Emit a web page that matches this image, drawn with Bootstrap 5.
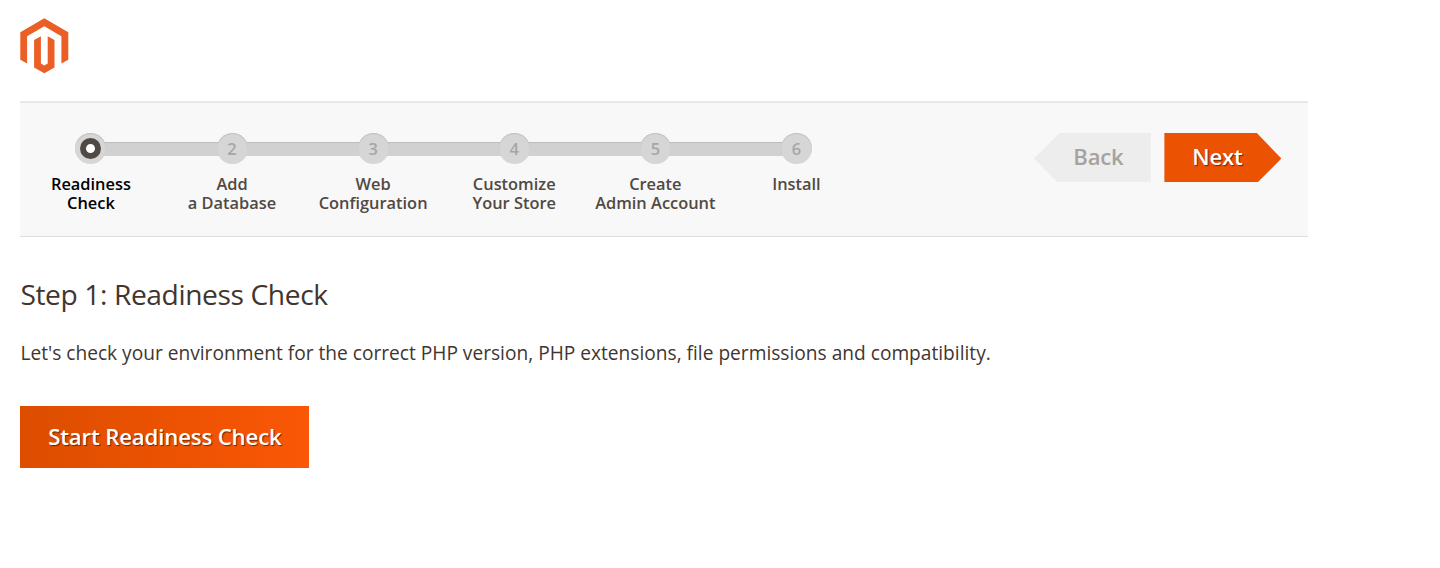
<!DOCTYPE html>
<html lang="en">
<head>
<meta charset="utf-8">
<meta name="viewport" content="width=device-width, initial-scale=1">
<title>Magento Installation</title>
<link href="https://cdn.jsdelivr.net/npm/bootstrap@5.3.0/dist/css/bootstrap.min.css" rel="stylesheet">
<style>
body{font-family:"Open Sans","Noto Sans",sans-serif;color:#41362f;background:#fff}
.wizard{width:1288px;margin-left:20.4px}
.logo{width:49px;height:56px;margin-top:18px}
.steps-bar{height:136px;margin-top:27px;background:#f8f8f8;border-top:2px solid #e8e8e8;border-bottom:1px solid #dedede;padding:30px 27px 0 0}
.step-item{width:141.1px;position:relative;color:#514943;font-size:16.4px;font-weight:600;line-height:19.2px}
.step-item:not(:last-child)::after{content:"";position:absolute;left:50%;top:9px;width:100%;height:14px;background:#d1d1d1;border-top:1px solid #bdbdbd}
.step-dot{position:relative;z-index:1;width:31px;height:31px;border-radius:50%;background:#d6d6d6;box-shadow:inset 0 1px 1px #c0c0c0;color:#a6a6a6;font-size:16.4px;margin-bottom:10px}
.step-item.current{color:#000}
.current .step-dot::before{content:"";width:21px;height:21px;border:6px solid #514943;border-radius:50%;background:#fff}
.btn-step{--bs-btn-border-width:0;--bs-btn-border-radius:0;width:117px;height:49px;font-size:22.1px;font-weight:600;line-height:47px}
.btn-back{background:#ededed;color:#a6a29f;letter-spacing:-.2px;margin-right:13.5px;clip-path:polygon(0 52%,22% 0,100% 0,100% 100%,20% 100%)}
.btn-next{background:#eb5202;color:#fff;letter-spacing:-.2px;text-shadow:1px 1px 1px #0008;clip-path:polygon(0 0,79% 0,100% 52%,80% 100%,0 100%)}
.btn-back.p-0{padding:0 0 2px 12px!important}
.btn-next.p-0{padding:0 11px 2px 0!important}
.step-title{font-size:28.2px;font-weight:400;line-height:36px;margin-top:39px;letter-spacing:-.4px}
.step-lead{font-size:19.15px;line-height:26px;margin-top:28px}
.btn-start{--bs-btn-border-width:0;--bs-btn-border-radius:0;width:289px;height:62px;margin-top:40px;color:#fff;background:linear-gradient(90deg,#dd4d00,#eb5202 50%,#fa5706);font-size:22.2px;letter-spacing:-.16px;font-weight:600;text-shadow:1px 1px 1px #0008}
</style>
</head>
<body>
<main class="wizard d-flex flex-column align-items-start">
  <svg class="logo flex-shrink-0" viewBox="0 0 49 56" role="img" aria-label="Magento"><path fill="#eb5e25" d="M24.3.3 48.3 14.2V41.7L41.4 45.6V18.2L24.3 8.3 7.1 18.2V45.6L.3 41.7V14.2ZM20.9 18.2V45.5L24.3 47.5 27.7 45.5V18.2L34.5 22.1V49.4L24.3 55.3 14.1 49.4V22.1Z"/></svg>
  <nav class="steps-bar w-100 d-flex justify-content-between align-items-start">
    <div class="d-flex text-center">
      <div class="step-item current d-flex flex-column align-items-center"><span class="step-dot d-flex align-items-center justify-content-center"></span><span class="step-label">Readiness<br>Check</span></div>
      <div class="step-item d-flex flex-column align-items-center"><span class="step-dot d-flex align-items-center justify-content-center">2</span><span class="step-label">Add<br>a Database</span></div>
      <div class="step-item d-flex flex-column align-items-center"><span class="step-dot d-flex align-items-center justify-content-center">3</span><span class="step-label">Web<br>Configuration</span></div>
      <div class="step-item d-flex flex-column align-items-center"><span class="step-dot d-flex align-items-center justify-content-center">4</span><span class="step-label">Customize<br>Your Store</span></div>
      <div class="step-item d-flex flex-column align-items-center"><span class="step-dot d-flex align-items-center justify-content-center">5</span><span class="step-label">Create<br>Admin Account</span></div>
      <div class="step-item d-flex flex-column align-items-center"><span class="step-dot d-flex align-items-center justify-content-center">6</span><span class="step-label">Install</span></div>
    </div>
    <div class="d-flex">
      <button class="btn btn-step btn-back p-0">Back</button>
      <button class="btn btn-step btn-next p-0">Next</button>
    </div>
  </nav>
  <h1 class="step-title mb-0">Step 1: Readiness Check</h1>
  <p class="step-lead mb-0 text-nowrap">Let's check your environment for the correct PHP version, PHP extensions, file permissions and compatibility.</p>
  <button class="btn btn-start p-0">Start Readiness Check</button>
</main>
<script src="https://cdn.jsdelivr.net/npm/bootstrap@5.3.0/dist/js/bootstrap.bundle.min.js"></script>
</body>
</html>
